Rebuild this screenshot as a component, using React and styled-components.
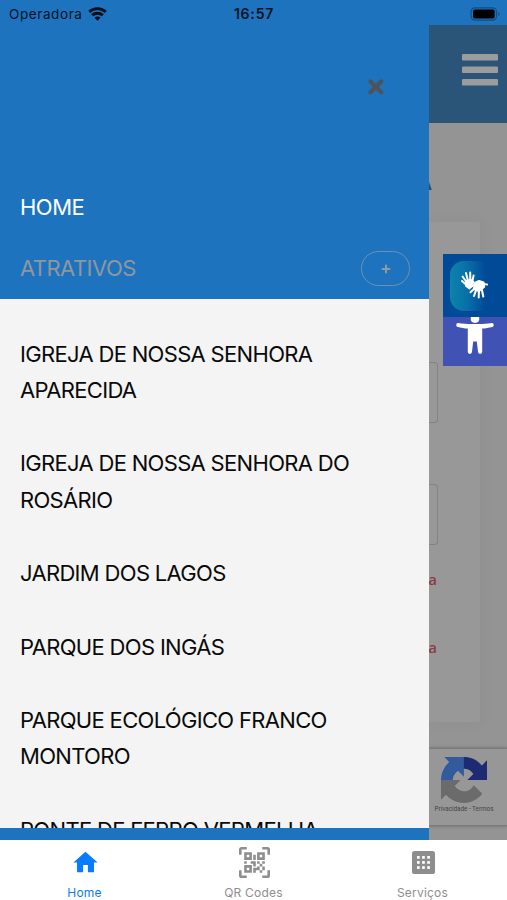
import React from "react";
import styled, { createGlobalStyle } from "styled-components";

const Global = createGlobalStyle`
  * { box-sizing: border-box; }
  body { margin: 0; font-family: Inter, "Liberation Sans", sans-serif; }
`;

const blue = "#1e73be";

const Screen = styled.div`
  width: 507px;
  height: 900px;
  display: flex;
  flex-direction: column;
  overflow: hidden;
  background: #fff;
`;

const StatusBar = styled.header`
  height: 25px;
  flex: none;
  display: grid;
  grid-template-columns: 1fr auto 1fr;
  align-items: center;
  padding: 2px 6px 0 9px;
  background: ${blue};
  color: #04121f;
  font-size: 13.5px;
`;

const Carrier = styled.div`
  display: flex;
  align-items: center;
  gap: 5px;
  letter-spacing: 0.6px;
`;

const Clock = styled.div`
  font-size: 14px;
  font-weight: 600;
  letter-spacing: 0.8px;
  transform: translateX(-1px);
`;

const Battery = styled.div`
  display: flex;
  justify-content: flex-end;
`;

const Body = styled.main`
  height: 815px;
  flex: none;
  display: grid;
  grid-template-columns: 429px 78px;
`;

const Drawer = styled.nav`
  display: flex;
  flex-direction: column;
  min-height: 0;
  background: ${blue};
  border-bottom: 12px solid ${blue};
`;

const CloseRow = styled.div`
  height: 152px;
  flex: none;
  display: flex;
  justify-content: flex-end;
  padding: 53px 44px 0 0;
`;

const MenuRow = styled.div`
  height: 61px;
  flex: none;
  display: flex;
  align-items: center;
  justify-content: space-between;
  padding: 0 19px 0 20px;
  color: ${(p) => (p.$active ? "#fff" : "#8f979d")};
`;

const MenuLabel = styled.span`
  padding-bottom: 2px;
  font-size: 22px;
  letter-spacing: -0.52px;
`;

const Expand = styled.button`
  width: 49px;
  height: 35px;
  display: flex;
  align-items: center;
  justify-content: center;
  padding: 0;
  border: 1.5px solid #6d91b1;
  border-radius: 18px;
  background: none;
`;

const SubMenu = styled.ul`
  flex: 1;
  min-height: 0;
  overflow: hidden;
  margin: 0;
  padding: 36.5px 20px 0;
  list-style: none;
  background: #f4f4f4;
`;

const SubItem = styled.li`
  max-width: 340px;
  margin-bottom: 36.6px;
  color: #0a0a0a;
  font-size: 22px;
  line-height: 36.65px;
  letter-spacing: -0.68px;
`;

const Page = styled.section`
  position: relative;
  display: flex;
  flex-direction: column;
  overflow: hidden;
  background: #949494;
`;

const PageHeader = styled.div`
  height: 98px;
  flex: none;
  display: flex;
  justify-content: flex-end;
  padding: 29px 9.5px 0 0;
  background: #2a5478;
`;

const TitleClip = styled.div`
  height: 99px;
  flex: none;
  display: flex;
  justify-content: flex-end;
  align-items: center;
  width: 3px;
  padding-top: 23px;
  overflow: hidden;
  color: #234b70;
  font-size: 16px;
  font-weight: 700;
`;

const Card = styled.div`
  width: 51px;
  height: 500px;
  flex: none;
  display: flex;
  flex-direction: column;
  background: #989898;
  box-shadow: 0 0 16px rgba(0, 0, 0, 0.045);
`;

const Field = styled.div`
  width: 8.5px;
  height: 61px;
  flex: none;
  margin-top: ${(p) => p.$top};
  border: 1px solid #808388;
  border-left: 0;
  border-radius: 0 4px 4px 0;
`;

const Warning = styled.div`
  width: 8px;
  height: 24px;
  flex: none;
  display: flex;
  justify-content: flex-end;
  margin-top: ${(p) => p.$top};
  overflow: hidden;
  color: #8b3b45;
  font: 600 15px/24px "Open Sans", sans-serif;
`;

const Recaptcha = styled.div`
  height: 76px;
  flex: none;
  display: flex;
  flex-direction: column;
  align-items: center;
  margin-top: 27px;
  padding: 8px 8px 0 0;
  background: #979797;
  box-shadow: 0 0 3px 1px #6b6b6b;
  color: #444;
  font: 6.3px/13px Roboto, sans-serif;
  white-space: nowrap;
`;

const Floating = styled.aside`
  position: absolute;
  top: 229px;
  right: 0;
  width: 64px;
`;

const Tool = styled.div`
  height: ${(p) => p.$height};
  display: flex;
  align-items: ${(p) => p.$align || "flex-start"};
  background: ${(p) => p.$bg};
`;

const SignBadge = styled.div`
  width: 57px;
  height: 50px;
  margin-left: 7px;
  padding: 8px 0 0 10px;
  border-radius: 14px 0 0 14px;
  background: linear-gradient(90deg, #0d83ac, #0870a8 30%, #004a98 62%);
`;

const PersonWrap = styled.div`
  margin-left: 13px;
`;

const TabBar = styled.footer`
  height: 60px;
  flex: none;
  display: grid;
  grid-template-columns: repeat(3, 1fr);
  background: #fff;
`;

const Tab = styled.div`
  display: flex;
  flex-direction: column;
  align-items: center;
  color: ${(p) => (p.$active ? "#067bfb" : "#8e8e8f")};
  font-size: 12px;
  line-height: 16px;
  letter-spacing: 0.2px;
`;

const TabIcon = styled.div`
  height: 45px;
  display: flex;
  align-items: center;
  justify-content: center;
  padding-left: 1px;
`;

const attractions = [
  "IGREJA DE NOSSA SENHORA APARECIDA",
  "IGREJA DE NOSSA SENHORA DO ROSÁRIO",
  "JARDIM DOS LAGOS",
  "PARQUE DOS INGÁS",
  "PARQUE ECOLÓGICO FRANCO MONTORO",
  "PONTE DE FERRO VERMELHA",
];

const WifiIcon = () => (
  <svg width="19" height="14" viewBox="0 0 19 14" fill="none" stroke="#03101c" strokeWidth="2.9">
    <path d="M1.300 4.900C5.800 .5 13.200 .5 17.700 4.900" />
    <path d="M4.200 8.300C7.200 5.500 11.800 5.500 14.800 8.300" />
    <path d="M6.500 10.700C8.200 9.200 10.800 9.200 12.500 10.700L9.500 13.800Z" fill="#03101c" stroke="none" />
  </svg>
);

const BatteryIcon = () => (
  <svg width="31" height="14" viewBox="0 0 31 14">
    <rect x="1" y=".8" width="25.5" height="12.4" rx="4" fill="none" stroke="#134d80" strokeWidth="1.2" />
    <rect x="3" y="2.6" width="21.6" height="8.8" rx="2" />
    <path d="M28.2 5v4c2-.7 2-3.3 0-4Z" fill="#155288" />
  </svg>
);

const CloseIcon = () => (
  <svg width="18" height="18" viewBox="0 0 18 18" stroke="#4e5358" strokeWidth="4.2" strokeLinecap="round">
    <path d="M3.400 3.400 14.300 14.300M14.300 3.400 3.400 14.300" />
  </svg>
);

const PlusIcon = () => (
  <svg width="10" height="10" viewBox="0 0 10 10" stroke="#929aa0" strokeWidth="2" strokeLinecap="round">
    <path d="M5 1.5v7M1.5 5h7" />
  </svg>
);

const MenuIcon = () => (
  <svg width="36" height="32" viewBox="0 0 36 32" fill="#9c9c9c">
    <rect width="36" height="6.6" rx="1.2" />
    <rect y="12.5" width="36" height="6.6" rx="1.2" />
    <rect y="25" width="36" height="6.6" rx="1.2" />
  </svg>
);

const SignIcon = () => (
  <svg width="29" height="32" viewBox="0 0 29 32" stroke="#fff" strokeLinecap="round" strokeLinejoin="round">
    <path d="M6 12 10.500 10.500 13.500 13 9.500 19.500 6 17Z" fill="#fff" strokeWidth="1.8" />
    <path d="M6.500 13 2.600 7.500M8 12 6 4M10.300 11 10.200 3.500M12.300 12.500 13.600 6.500M6.500 16 2 12" fill="none" strokeWidth="2" />
    <path d="M15 14 19 12 23.500 13.500 24 18 19 22 14 20Z" fill="#fff" strokeWidth="2.2" />
    <path d="M15 19 10.500 23.300M16.500 20 14 27M19 20 18.700 28.500M21.500 19 23.300 27.500M23 15 27 15.500M14.500 15.500 11 18" fill="none" strokeWidth="2.100" />
  </svg>
);

const PersonIcon = () => (
  <svg width="38" height="38" viewBox="0 0 38 38" fill="#fff">
    <path d="M14.800 0h8.400v2.300c0 2.300-1.800 3.600-4.200 3.600s-4.200-1.300-4.200-3.600Z" />
    <path d="M2 6c5 .7 8.800 1.100 12.500 1.100h9c3.700 0 7.500-.4 12.500-1.100 2-.2 2.300 3.500.4 3.900-3.700.8-6.900 1.300-10.200 1.700V34.800a2.100 2.100 0 0 1-4.200 0L20.800 24.500h-3.600L16 34.800a2.100 2.100 0 0 1-4.200 0V11.600c-3.300-.4-6.500-.9-10.200-1.700-1.900-.4-1.600-4.100.4-3.900Z" />
  </svg>
);

const RecaptchaIcon = () => (
  <svg width="46" height="46" viewBox="0 0 64 64">
    <path fill="#1e2b72" d="M64 31.955l-.033-1.37V4.687l-7.16 7.16C50.948 4.674 42.033.093 32.05.093c-10.4 0-19.622 4.96-25.458 12.64l11.736 11.86a15.55 15.55 0 0 1 4.754-5.334c2.05-1.6 4.952-2.906 8.968-2.906.485 0 .86.057 1.135.163 4.976.393 9.288 3.14 11.828 7.124l-8.307 8.307L64 31.953" />
    <path fill="#325b9e" d="M31.862.094l-1.37.033H4.594l7.16 7.16C4.58 13.147 0 22.06 0 32.046c0 10.4 4.96 19.622 12.64 25.458L24.5 45.768a15.55 15.55 0 0 1-5.334-4.754c-1.6-2.05-2.906-4.952-2.906-8.968 0-.485.057-.86.163-1.135.393-4.976 3.14-9.288 7.124-11.828l8.307 8.307L31.86.095" />
    <path fill="#6b6b6b" d="M.001 32.045l.033 1.37v25.898l7.16-7.16c5.86 7.173 14.774 11.754 24.76 11.754 10.4 0 19.622-4.96 25.458-12.64l-11.736-11.86a15.55 15.55 0 0 1-4.754 5.334c-2.05 1.6-4.952 2.906-8.968 2.906-.485 0-.86-.057-1.135-.163-4.976-.393-9.288-3.14-11.828-7.124l8.307-8.307c-10.522.04-22.4.066-27.295-.005" />
  </svg>
);

const HomeIcon = () => (
  <svg width="29" height="29" viewBox="0 0 24 24" fill="currentColor">
    <path d="M10 20v-6h4v6h5v-8h3L12 3 2 12h3v8z" />
  </svg>
);

const QrIcon = () => (
  <svg width="31" height="31" viewBox="0 0 24 24" fill="currentColor">
    <path d="M4,4H10V10H4V4M20,4V10H14V4H20M14,15H16V13H14V11H16V13H18V11H20V13H18V15H20V18H18V20H16V18H13V20H11V16H14V15M16,15V18H18V15H16M4,20V14H10V20H4M6,6V8H8V6H6M16,6V8H18V6H16M6,16V18H8V16H6M4,11H6V13H4V11M9,11H13V15H11V13H9V11M11,6H13V10H11V6M2,2V6H0V2A2,2 0 0,1 2,0H6V2H2M22,0A2,2 0 0,1 24,2V6H22V2H18V0H22M2,18V22H6V24H2A2,2 0 0,1 0,22V18H2M22,22V18H24V22A2,2 0 0,1 22,24H18V22H22Z" />
  </svg>
);

const ServicesIcon = () => (
  <svg width="23" height="23" viewBox="0 0 23 23">
    <rect width="23" height="23" rx="2.6" fill="currentColor" />
    {[5, 10.1, 15.2].map((y) =>
      [5, 10.1, 15.2].map((x) => <rect key={`${x}-${y}`} x={x} y={y} width="2.7" height="2.7" fill="#fff" />)
    )}
  </svg>
);

export default function App() {
  return (
    <Screen>
      <Global />
      <StatusBar>
        <Carrier>Operadora <WifiIcon /></Carrier>
        <Clock>16:57</Clock>
        <Battery><BatteryIcon /></Battery>
      </StatusBar>
      <Body>
        <Drawer>
          <CloseRow><CloseIcon /></CloseRow>
          <MenuRow $active><MenuLabel>HOME</MenuLabel></MenuRow>
          <MenuRow>
            <MenuLabel>ATRATIVOS</MenuLabel>
            <Expand aria-label="Expandir"><PlusIcon /></Expand>
          </MenuRow>
          <SubMenu>
            {attractions.map((name) => <SubItem key={name}>{name}</SubItem>)}
          </SubMenu>
        </Drawer>
        <Page>
          <PageHeader><MenuIcon /></PageHeader>
          <TitleClip>A</TitleClip>
          <Card>
            <Field $top="140px" />
            <Field $top="61px" />
            <Warning $top="22px">a</Warning>
            <Warning $top="44px">a</Warning>
          </Card>
          <Recaptcha><RecaptchaIcon />Privacidade - Termos</Recaptcha>
          <Floating>
            <Tool $height="63px" $bg="#004a98" $align="center"><SignBadge><SignIcon /></SignBadge></Tool>
            <Tool $height="49px" $bg="#4053b4"><PersonWrap><PersonIcon /></PersonWrap></Tool>
          </Floating>
        </Page>
      </Body>
      <TabBar>
        <Tab $active><TabIcon><HomeIcon /></TabIcon>Home</Tab>
        <Tab><TabIcon><QrIcon /></TabIcon>QR Codes</Tab>
        <Tab><TabIcon><ServicesIcon /></TabIcon>Serviços</Tab>
      </TabBar>
    </Screen>
  );
}
